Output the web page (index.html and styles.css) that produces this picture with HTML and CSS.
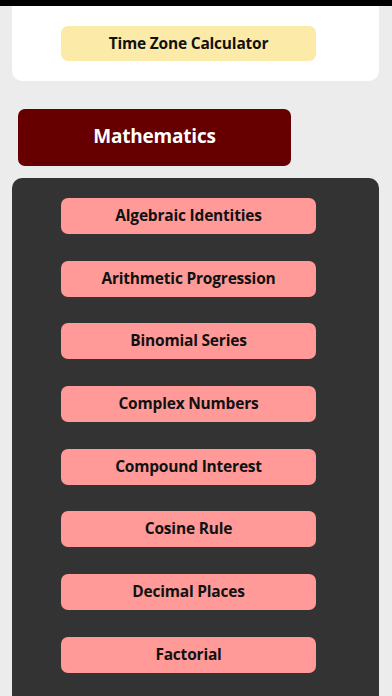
FILE: index.html
```html
<!DOCTYPE html>
<html lang="en">
<head>
<meta charset="utf-8">
<meta name="viewport" content="width=device-width, initial-scale=1">
<title>Calculators</title>
<link rel="stylesheet" href="styles.css">
</head>
<body>
<div class="topbar"></div>
<div class="card">
  <div class="btn btn-yellow">Time Zone Calculator</div>
</div>
<div class="section-title">Mathematics</div>
<div class="panel">
  <div class="btn btn-pink">Algebraic Identities</div>
  <div class="btn btn-pink">Arithmetic Progression</div>
  <div class="btn btn-pink">Binomial Series</div>
  <div class="btn btn-pink">Complex Numbers</div>
  <div class="btn btn-pink">Compound Interest</div>
  <div class="btn btn-pink">Cosine Rule</div>
  <div class="btn btn-pink">Decimal Places</div>
  <div class="btn btn-pink">Factorial</div>
</div>
</body>
</html>
```
FILE: styles.css
```css
html, body {
  margin: 0;
  padding: 0;
}
body {
  background: #ececec;
  font-family: "Open Sans", "DejaVu Sans", sans-serif;
  height: 696px;
  overflow: hidden;
}
.topbar {
  height: 6px;
  background: #000;
}
.card {
  margin: 0 13px 0 12px;
  background: #fff;
  border-radius: 0 0 10px 10px;
  padding: 20px 0 20px 49px;
}
.btn {
  width: 255px;
  height: 36px;
  padding-bottom: 2px;
  border-radius: 7px;
  display: flex;
  align-items: center;
  justify-content: center;
  font-weight: 700;
  font-size: 15.5px;
  letter-spacing: -0.2px;
  color: #111;
  box-sizing: border-box;
}
.btn-yellow {
  height: 35px;
  background: #fbeaa8;
}
.section-title {
  margin: 28px 0 0 18px;
  width: 273px;
  height: 57px;
  padding-bottom: 3px;
  box-sizing: border-box;
  background: #660000;
  border-radius: 7px;
  color: #fff;
  font-weight: 700;
  font-size: 19px;
  letter-spacing: -0.2px;
  display: flex;
  align-items: center;
  justify-content: center;
}
.panel {
  margin: 12px 13px 0 12px;
  background: #333333;
  border-radius: 10px 10px 0 0;
  padding: 20px 0 40px 49px;
  display: flex;
  flex-direction: column;
  gap: 26.7px;
}
.btn-pink {
  background: #ff9a98;
}
```
